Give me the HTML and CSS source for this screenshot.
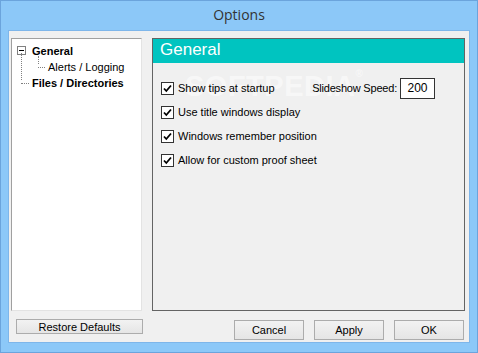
FILE: index.html
```html
<!DOCTYPE html>
<html lang="en">
<head>
    <meta charset="UTF-8">
    <title>Options</title>
    <link rel="stylesheet" href="styles.css">
</head>
<body>
<div class="window">
    <div class="titlebar">Options</div>
    <div class="client">
        <div class="top">
            <div class="tree">
                <div class="node root">
                    <span class="expander"></span>
                    <span class="label bold">General</span>
                </div>
                <div class="node child">
                    <span class="label">Alerts / Logging</span>
                </div>
                <div class="node root last">
                    <span class="label bold">Files / Directories</span>
                </div>
                <span class="vline v1"></span>
                <span class="vline v2"></span>
            </div>
            <div class="panel">
                <div class="panel-head">General</div>
                <div class="watermark">SOFTPEDIA<sup>&reg;</sup></div>
                <div class="options">
                    <div class="row">
                        <label class="check"><span class="box"><svg width="9" height="9" viewBox="0 0 9 9"><path d="M1 4.5 L3.3 7 L8 1.5" fill="none" stroke="#000" stroke-width="1.8"/></svg></span>Show tips at startup</label>
                        <div class="speed">Slideshow Speed:<span class="field">200</span></div>
                    </div>
                    <div class="row">
                        <label class="check"><span class="box"><svg width="9" height="9" viewBox="0 0 9 9"><path d="M1 4.5 L3.3 7 L8 1.5" fill="none" stroke="#000" stroke-width="1.8"/></svg></span>Use title windows display</label>
                    </div>
                    <div class="row">
                        <label class="check"><span class="box"><svg width="9" height="9" viewBox="0 0 9 9"><path d="M1 4.5 L3.3 7 L8 1.5" fill="none" stroke="#000" stroke-width="1.8"/></svg></span>Windows remember position</label>
                    </div>
                    <div class="row">
                        <label class="check"><span class="box"><svg width="9" height="9" viewBox="0 0 9 9"><path d="M1 4.5 L3.3 7 L8 1.5" fill="none" stroke="#000" stroke-width="1.8"/></svg></span>Allow for custom proof sheet</label>
                    </div>
                </div>
            </div>
        </div>
        <div class="bottom">
            <button class="btn restore">Restore Defaults</button>
            <div class="actions">
                <button class="btn">Cancel</button>
                <button class="btn">Apply</button>
                <button class="btn">OK</button>
            </div>
        </div>
    </div>
</div>
</body>
</html>
```
FILE: styles.css
```css
*{margin:0; padding:0; box-sizing:border-box;}
body{width:478px; height:353px; overflow:hidden; font-family:"Liberation Sans", Arial, sans-serif; font-size:11px; color:#000;}
.window{width:478px; height:353px; background:#8cc8f8; border:1px solid #6ba4dc; display:flex; flex-direction:column;}
.titlebar{height:29px; line-height:28px; text-align:center; font-family:"Open Sans", "Noto Sans", sans-serif; font-size:14px; color:#333;}
.client{margin:0 7px 9px 7px; flex:1; background:#f0f0f0; border:1px solid #7eb6ea; padding:7px 4px 1px 2px; display:flex; flex-direction:column;}
.top{display:flex; gap:10px; height:273px;}
.tree{width:131px; background:#fff; border:1px solid #a0a0a0; border-right-color:#e3e3e3; border-bottom-color:#e3e3e3; position:relative; padding-top:4px;}
.node{height:16px; display:flex; align-items:center; position:relative;}
.root{padding-left:19px;}
.child{padding-left:35px;}
.bold{font-weight:bold;}
.expander{position:absolute; left:5px; top:3px; width:9px; height:9px; border:1px solid #808080; background:#fff;}
.expander::after{content:""; position:absolute; left:1px; top:3px; width:5px; height:1px; background:#000;}
.root.last::before, .child::before{content:""; position:absolute; top:8px; border-top:1px dotted #808080;}
.root.last::before{left:9px; width:8px;}
.child::before{left:26px; width:7px;}
.vline{position:absolute; border-left:1px dotted #808080;}
.v1{left:9px; top:14px; height:27px;}
.v2{left:26px; top:17px; height:8px;}
.label{padding-left:1px;}
.panel{width:313px; border:1px solid #646464; position:relative; overflow:hidden;}
.panel-head{height:24px; background:#00c4c0; color:#fff; font-size:17px; line-height:22px; padding-left:7px;}
.watermark{position:absolute; left:32px; top:31px; font-size:29px; font-weight:bold; color:rgba(255,255,255,0.5); letter-spacing:0.5px; pointer-events:none;}
.watermark sup{font-size:10px; vertical-align:top; position:relative; top:-2px;}
.options{padding:13px 0 0 8px; display:flex; flex-direction:column; position:relative;}
.row{height:24px; display:flex; align-items:center;}
.check{display:flex; align-items:center; gap:4px;}
.box{width:13px; height:13px; border:1px solid #333; background:#fff; display:flex; align-items:center; justify-content:center;}
.speed{margin-left:auto; margin-right:29px; display:flex; align-items:center; gap:3px; letter-spacing:-0.2px;}
.field{width:35px; height:21px; border:1px solid #333; background:#fff; display:flex; align-items:center; justify-content:center; font-size:12px; letter-spacing:0;}
.bottom{display:flex; margin-top:9px; height:20px;}
.btn{font-family:"Liberation Sans", Arial, sans-serif; font-size:11px; color:#000; border:1px solid #acacac; background:linear-gradient(#f2f2f2, #e5e5e5); height:20px; width:70px;}
.restore{width:127px; height:15px; margin:-1px 0 0 5px; line-height:12px;}
.actions{margin-left:auto; display:flex; gap:10px; margin-right:1px;}
```
